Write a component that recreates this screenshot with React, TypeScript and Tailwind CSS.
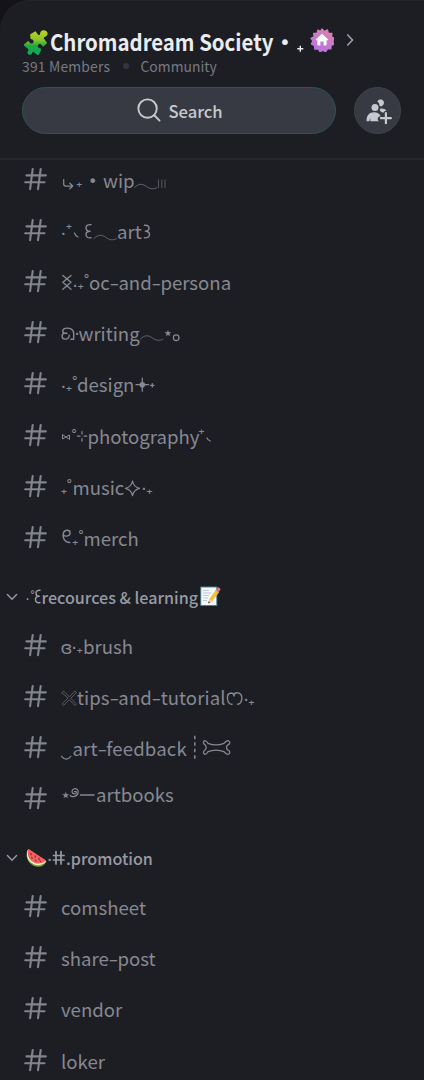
import React from 'react';

/**
 * Ornament between the words of a channel name.
 * x is the left edge on the page, y = 0 is the middle of the row.
 */
function Deco({ x, w, children }: { x: number; w: number; children: React.ReactNode }) {
  return (
    <svg
      width={w}
      height={32}
      viewBox={`${x} -16 ${w} 32`}
      fill="none"
      stroke="currentColor"
      strokeWidth={1.25}
      strokeLinecap="round"
      strokeLinejoin="round"
      className="shrink-0 overflow-visible"
    >
      {children}
    </svg>
  );
}

interface MarkProps {
  x: number;
  y: number;
}

const Glyph = ({ x, y, dy, size, children }: MarkProps & { dy: number; size: number; children: string }) => (
  <text
    x={x}
    y={y + dy}
    fontSize={size}
    textAnchor="middle"
    fill="currentColor"
    stroke="none"
    className="font-['DejaVu_Sans',sans-serif]"
  >
    {children}
  </text>
);

const Plus = ({ x, y }: MarkProps) => (
  <g className="font-bold">
    <Glyph x={x} y={y} dy={1} size={13}>₊</Glyph>
  </g>
);
const Ring = ({ x, y }: MarkProps) => <Glyph x={x} y={y} dy={11.7} size={15}>˚</Glyph>;
const Dot = ({ x, y }: MarkProps) => <Glyph x={x} y={y} dy={6} size={18}>·</Glyph>;
const Bullet = ({ x, y }: MarkProps) => <Glyph x={x} y={y} dy={6} size={16}>•</Glyph>;
const Star = ({ x, y }: MarkProps) => <Glyph x={x} y={y} dy={5.8} size={18}>⋆</Glyph>;

const Wave = ({ x, y }: MarkProps) => (
  <path
    d={`M${x} ${y}c4-4.3 8-4 12-1s7 2.800 10.500 1.200`}
    strokeWidth={0.9}
    opacity={0.7}
  />
);

// Hyphens are drawn wide, as in "share–post"
function Word({ className, children }: { className: string; children: string }) {
  return (
    <span className={`shrink-0 pt-[2px] whitespace-nowrap ${className}`}>
      {children.split('-').map((part, i) => (
        <React.Fragment key={i}>
          {i > 0 && <span className="inline-block scale-x-150 px-[1.1px]">-</span>}
          {part}
        </React.Fragment>
      ))}
    </span>
  );
}

function HashIcon() {
  return (
    <svg width="24" height="24" viewBox="0 0 24 24" fill="none" stroke="#82848e" strokeWidth="2.1" strokeLinecap="round" className="shrink-0">
      <path d="M9.700 2 7.100 22.200M17.700 2l-2.700 20.200M3.500 8.400h19.300M2.200 15.300h19.300" />
    </svg>
  );
}

function Channel({ children, raised }: { children: React.ReactNode; raised?: boolean }) {
  return (
    <li className="flex h-[51.2px] items-center pl-[23.2px]">
      <HashIcon />
      <div className={`ml-[13.8px] flex h-8 items-center ${raised ? 'mb-[10px]' : ''}`}>{children}</div>
    </li>
  );
}

function Category({ children }: { children: React.ReactNode }) {
  return (
    <h2 className="flex h-[56.6px] items-center pt-3 pl-[6px] text-[16.1px] font-medium text-[#969aa3]">
      <svg width="12" height="8" viewBox="0 0 12 8" fill="none" stroke="currentColor" strokeWidth="1.4" strokeLinecap="round" className="shrink-0">
        <path d="m1.400 1.500 4.600 4.800 4.600-4.800" />
      </svg>
      <div className="ml-2 flex h-8 items-center">{children}</div>
    </h2>
  );
}

function PuzzleIcon() {
  return (
    <svg width="26" height="27" viewBox="0 0 26 27" className="shrink-0">
      <defs>
        <linearGradient id="puzzle" x1="0" y1="0" x2="0" y2="1">
          <stop offset="0" stopColor="#c2d21f" />
          <stop offset=".4" stopColor="#86c52b" />
          <stop offset=".62" stopColor="#22a83c" />
          <stop offset="1" stopColor="#0fa765" />
        </linearGradient>
      </defs>
      <path
        fill="url(#puzzle)"
        d="M7.2 5.2 12.5 2.2l2.600 3.500c.6.800 1.700.300 1.900-.7.1-2 1.200-3.500 3-3.800 2-.3 4 .8 4.500 2.600.5 2-.8 3.600-2.700 4.200-1 .3-1.200 1-.6 1.900l2.900 4-3 3.200c-1 .8-1.800.2-2.300-.7-.9-1.500-2.600-1.800-3.500-.7-1 1.300-.3 2.900 1.200 3.400 1.100.4 2 .8 1.600 1.800L16 25.500c-.6.8-1.200.9-2 .3l-2.900-2.400c-.9-.8-1.700-.5-1.900.5-.4 1.600-1.900 2.200-3.400 1.600-1.400-.6-1.800-2.100-.9-3.300.8-1.200.7-1.900-.3-2.600L1.400 17c-.7-.7-.6-1.300.1-1.900l3-2.500c.9-.6 1.600-.2 2 .7.7 1.200 2 1.700 3.100 1 1.400-.9 1.400-2.600.1-3.500-.8-.5-1.700-.7-2.200-1.400-.3-.6 0-2.200-.3-4.200z"
      />
    </svg>
  );
}

function HomeBadge() {
  return (
    <svg width="24" height="24" viewBox="0 0 24 24" className="shrink-0">
      <defs>
        <linearGradient id="badge" x1=".8" y1="0" x2=".3" y2="1">
          <stop offset="0" stopColor="#dc83ad" />
          <stop offset="1" stopColor="#b473e2" />
        </linearGradient>
      </defs>
      <path
        fill="url(#badge)"
        stroke="url(#badge)"
        strokeWidth="1.2"
        strokeLinejoin="round"
        d="m12 .9 2.300 2.600 3.200-1.600 1 3.400 3.500.100-.5 3.400 3.100 1.600-1.900 2.900 1.500 3.100-3.100 1.100-.2 3.500-3.500-.1-1.700 3-2.900-1.600-2.800 1.600-1.700-2.800-3.600.100-.2-3.500L1.300 16l1.500-3L.9 10.200 4 8.700l-.4-3.400 3.400-.3L8 1.900l2.300 1.600z"
      />
      <path fill="#fff" d="m12 5.700 6 5.500c.5.500.200 1-.4 1h-1v4.200c0 .7-.3 1-1 1h-2v-4h-3.200v4h-2c-.7 0-1-.3-1-1v-4.200h-1c-.6 0-.9-.5-.4-1z" />
    </svg>
  );
}

function InviteIcon() {
  return (
    <svg width="28" height="28" viewBox="0 0 28 28" fill="#c8c9ce">
      <circle cx="11" cy="10.500" r="3.500" />
      <path d="M2.500 24c0-5.500 2.800-8.700 7.500-8.700 3.200 0 5.700 1.300 6.700 3.900-2 .2-3 1.200-3 2.800 0 1 .6 2 1.600 2.300H6.400l-.2-3.500-.9 3.500H3.400c-.6 0-.9-.1-.9-.3z" />
      <path d="M13.700 3.900c1.300-1.800 4.200-1.900 5.600-.2 1.300 1.700.7 4.400-1.400 5.300-.8.400-1.600.3-2.300 0-.1-1.900-.8-3.600-2.300-4.500z" />
      <path d="M16.300 11.500c2.700-.3 4.900.400 6.200 2-1.400.2-2.500.8-3 2.100-.9.2-1.700-.2-2.700-1l-1.100-1.100c.4-.6.6-1.300.6-2z" />
      <path d="M21.900 16.200v10M16.900 21.200h10" stroke="#c8c9ce" strokeWidth="2.200" strokeLinecap="round" />
    </svg>
  );
}

function MemoIcon() {
  return (
    <svg width="21" height="21" viewBox="0 0 21 21" className="shrink-0">
      <rect x=".8" y="1" width="16" height="18.500" fill="#f4f8fb" stroke="#447f9f" strokeWidth=".9" />
      <path d="M3 4.500h6M3 7h8M3 9.500h6M3 12h5M3 14.500h4" stroke="#a6b5bd" strokeWidth=".7" />
      <path d="m8.300 17.300 1-4.400L16.200 3.600l3 2.300-7.100 9.300z" fill="#fbc02d" />
      <path d="m9.300 12.900-1 4.400 3.800-2.100z" fill="#f4cf9b" />
      <path d="m8.700 15.300-.5 2.200 2-1z" fill="#3c3c3c" />
      <path d="m15.500 4.500 3 2.300" stroke="#9eb3bd" strokeWidth="1.500" />
      <path d="m16 3.500 1.400-1.900c.9-1 3.700 1 2.900 2.300l-1.400 1.900z" fill="#ee6b75" />
    </svg>
  );
}

function WatermelonIcon() {
  return (
    <svg width="21" height="19" viewBox="0 0 21 19" className="shrink-0">
      <path d="M1.500 1C-.8 7 1.500 14 7.500 16.700c5.200 2.300 10.600.7 13-4.200z" fill="#71a93b" />
      <path d="M1.500 1C-.2 7 2.100 12.800 7.800 15.200c4.800 2 9.500.8 12.300-2.900z" fill="#f3f0c2" />
      <path d="M2 .7C.9 6 3.200 11.600 8.300 13.700c4.300 1.700 8.500.8 11.300-1.600.5-.5.4-.9-.1-1.200L3.100.3C2.500-.1 2.100.1 2 .7z" fill="#f4605f" />
      <path d="M5 4.500v1.300M5.700 8.300l.4 1M9.200 7v1.300M9.600 11l.5.900M13 9.200v1.200M14 12l.8.500" stroke="#49302b" strokeWidth="1" strokeLinecap="round" />
    </svg>
  );
}

function Header() {
  return (
    <header className="h-[159px] shrink-0 border-b-2 border-[#26272c]">
      <div className="flex h-[54.500px] items-end pl-[23px]">
        <PuzzleIcon />
        <h1 className="ml-[1px] h-[34px] w-[222px] shrink-0 origin-left scale-x-[0.902] text-[22.6px] leading-[40px] font-bold whitespace-nowrap text-[#ebecef]">
          Chromadream Society
        </h1>
        <div className="h-8 w-[37.500px] text-[#ebecef]">
          <svg width="36" height="32" viewBox="272 -16 36 32" fill="none" className="overflow-visible">
            <Glyph x={284.800} y={1.500} dy={7.300} size={20}>•</Glyph>
            <path d="M297.300 8.700h6M300.300 5.700v6" stroke="currentColor" strokeWidth="1.400" />
          </svg>
        </div>
        <div className="mb-[4px] flex items-center gap-3">
          <HomeBadge />
          <svg width="9" height="14" viewBox="0 0 9 14" fill="none" stroke="#a1a3ab" strokeWidth="1.500" className="shrink-0">
            <path d="m1.300 1.500 5.200 5.500-5.200 5.500" />
          </svg>
        </div>
      </div>

      <div className="flex h-[21px] items-center pl-[22px] text-[13.900px] text-[#777a84]">
        <span className="w-[88px] tracking-[0.180px] whitespace-nowrap">391 Members</span>
        <span className="mr-[12px] ml-[12.500px] size-[6px] shrink-0 rounded-full bg-[#33363d]" />
        <span className="whitespace-nowrap">Community</span>
      </div>

      <div className="mt-[10.500px] flex items-center gap-[18px] pl-[22.300px]">
        <button className="flex h-[47px] w-[314px] shrink-0 items-center justify-center gap-[7.500px] rounded-full border border-[#2b5459] bg-[#383a43] pt-[2px] pl-[1px] text-[16.600px] font-medium text-[#c8c9ce]">
          <svg width="24" height="24" viewBox="0 0 25 25" fill="none" stroke="currentColor" strokeWidth="2" strokeLinecap="round" className="-mt-[4px]">
            <circle cx="11" cy="11" r="9.600" />
            <path d="m18 18 5.500 5.500" />
          </svg>
          Search
        </button>
        <button className="flex size-[47px] shrink-0 items-center justify-center rounded-full border border-[#41434c] bg-[#383a43]">
          <InviteIcon />
        </button>
      </div>
    </header>
  );
}

export default function App() {
  return (
    <div className="h-[1080px] w-[424px] overflow-hidden bg-[#131318] font-['Noto_Sans_CJK_JP',sans-serif]">
      <div className="flex h-full flex-col overflow-hidden rounded-tl-[30px] border-t border-[#24252a] bg-[#1d1e23]">
        <Header />

        <nav className="-mt-[7px] text-[18.600px] leading-8 text-[#868892]">
          <ul>
            <Channel>
              <Deco x={61} w={42}>
                <path d="M63.700.5v4.500q0 2 2 2h7M69.800 4.200l3 2.800-3 2.800" />
                <Plus x={79.300} y={6.800} />
                <Bullet x={92.700} y={1.500} />
              </Deco>
              <Word className="w-[31px]">wip</Word>
              <Deco x={134} w={32}>
                <Wave x={134.500} y={8.500} />
                <path d="M158.500 1v7.500M161.800 1v7.500M165 1v7.500" strokeWidth="0.800" opacity="0.700" />
              </Deco>
            </Channel>

            <Channel>
              <Deco x={61} w={56}>
                <Dot x={63.300} y={4.300} />
                <Plus x={69} y={-1.700} />
                <path d="M74.500 3q1 3 3.500 4" />
                <path d="M91-5.300c-3.500-.4-5 1-5 3 0 2.200 1.500 3.500 4 3.500-2.500 0-4 1.300-4 3.400 0 2.300 1.800 3.600 5 3.200" strokeWidth="1.400" />
                <Wave x={94} y={8.500} />
              </Deco>
              <Word className="w-[26px]">art</Word>
              <Deco x={143} w={8}>
                <path d="M144.500-4.700c3.300-.4 4.500 1 4.500 2.800 0 2-1.400 3.100-3.600 3.100 2.700 0 4.100 1.200 4.100 3.400 0 2.400-2 3.500-5 3.200" strokeWidth="1.400" />
              </Deco>
            </Channel>

            <Channel>
              <Deco x={61} w={28}>
                <path d="m62.800-5.500 8.200 6.800-8.200 7M71-5.500l-8.200 6.800 8.200 7" strokeWidth="1.400" />
                <Dot x={75} y={4.700} />
                <Plus x={80.700} y={7} />
                <Ring x={86.500} y={-4.300} />
              </Deco>
              <Word className="w-[142px]">oc-and-persona</Word>
            </Channel>

            <Channel>
              <Deco x={61} w={17.500}>
                <path d="M67 1.300h-2.300c-2.500-.3-2.800-4.100.500-4.900 4-.9 8.500.5 8.500 5.200V7.300M64.700 1.300c-3.500.300-3.400 5.400 0 5.800 3 .3 4.600-1.300 4.500-3.900M71 7.300h2.700" strokeWidth="1.400" />
                <Dot x={77} y={2} />
              </Deco>
              <Word className="w-[62px]">writing</Word>
              <Deco x={140.500} w={41}>
                <Wave x={141} y={7} />
                <Star x={168.300} y={1} />
                <circle cx="176.700" cy="5.700" r="2.800" />
              </Deco>
            </Channel>

            <Channel>
              <Deco x={61} w={16}>
                <Dot x={63.300} y={3.700} />
                <Plus x={69} y={7} />
                <Ring x={74.700} y={-4.300} />
              </Deco>
              <Word className="w-[58px]">design</Word>
              <Deco x={135} w={20}>
                <circle cx="142.300" cy="1.700" r="2.800" fill="currentColor" stroke="none" />
                <path d="M136 1.700h12.600M142.300-4.800v13M150.600 2.300h3.400M152.300.6V4" />
              </Deco>
            </Channel>

            <Channel>
              <Deco x={61} w={26.500}>
                <path d="M62.500 0v4l7-4v4z" strokeWidth="1" />
                <Ring x={74} y={-4} />
                <path d="M82-3.500V-1M82 3.500V6M77.500 1.200H80M84 1.200h2.700" />
              </Deco>
              <Word className="w-[111px]">photography</Word>
              <Deco x={198.500} w={14}>
                <Plus x={201.900} y={-1.700} />
                <path d="M207.500 3q1 2.500 3.300 3" />
              </Deco>
            </Channel>

            <Channel>
              <Deco x={61} w={11.500}>
                <Plus x={64} y={7} />
                <Ring x={69.300} y={-4.300} />
              </Deco>
              <Word className="w-[52px]">music</Word>
              <Deco x={124.500} w={28}>
                <path d="M133-5q1.200 6 7 7.300-5.800 1.300-7 7.300-1.200-6-7-7.300 5.800-1.300 7-7.300z" />
                <Dot x={144.300} y={3.300} />
                <Plus x={150} y={7} />
              </Deco>
            </Channel>

            <Channel>
              <Deco x={61} w={22.500}>
                <path d="M63.800-1.800c1.500 1.700 6.300.8 6.300-2.300 0-3.500-5.300-3.400-6.600-.2-1.600 4.300.7 9.600 6.300 9.800" strokeWidth="1.400" />
                <Plus x={75.300} y={7} />
                <Ring x={81} y={-4.300} />
              </Deco>
              <Word className="w-[56px]">merch</Word>
            </Channel>
          </ul>

          <Category>
            <Deco x={26} w={15.500}>
              <Glyph x={27.500} y={2} dy={4.700} size={14}>·</Glyph>
              <Glyph x={32.400} y={-4.800} dy={9.500} size={12}>˚</Glyph>
              <path d="M40-6.700c-3-.2-4 1.100-4 3 0 2 1.200 3 3.200 3-2.300 0-3.700 1.200-3.700 3.200 0 2.400 1.700 3.600 4.500 3" strokeWidth="1.500" />
            </Deco>
            <span className="w-[158px] shrink-0 whitespace-nowrap">recources &amp; learning</span>
            <MemoIcon />
          </Category>

          <ul>
            <Channel>
              <Deco x={61} w={22}>
                <Glyph x={66.500} y={0} dy={8.500} size={18}>ɞ</Glyph>
                <Dot x={74} y={3} />
                <Plus x={79.700} y={7.300} />
              </Deco>
              <Word className="w-[50px]">brush</Word>
            </Channel>

            <Channel>
              <Deco x={61} w={16}>
                <path d="m62-3.500 1.500-1.500 5.800 5.800L75-5l1.500 1.500-5.800 5.800 5.800 5.700L75 9.500l-5.700-5.800-5.800 5.800L62 8l5.800-5.700z" strokeWidth="0.800" opacity="0.700" />
              </Deco>
              <Word className="w-[149px] tracking-[0.070px]">tips-and-tutorial</Word>
              <Deco x={226} w={29}>
                <path d="M231-3c-3 .5-4 3-3.500 6 .5 3.200 2.300 5.500 4.500 5.300M231-3c2 0 3 1.200 3 3 0-2 1-3.200 2.800-3.200 3.500 0 5.600 2.500 5 6.200-.4 2.900-2 5.200-4.200 5.300" strokeWidth="1.400" />
                <Dot x={246} y={4.300} />
                <Plus x={251.500} y={7.800} />
              </Deco>
            </Channel>

            <Channel>
              <Deco x={61} w={11.500}>
                <path d="M61.500 9.300q4.700 5.500 9.300 0" />
              </Deco>
              <Word className="w-[115.500px] tracking-[0.130px]">art-feedback</Word>
              <Deco x={187.500} w={43}>
                <path d="M194.300-11.300V13" strokeDasharray="3.500 3" strokeLinecap="butt" strokeWidth="1.500" />
                <path d="M207.500-3.700c5 2 11 2 16 0 1.500-1.500 2.800-3.200 4.500-2.500 2 1 1.600 3.200-.5 4-2 1-2 4.300 0 5.400 2.100.8 2.500 3 .5 4-1.700.7-3-1-4.500-2.500-5-2-11-2-16 0-1 1.500-1.800 3.200-3.500 2.500-1.800-1-1.200-3 .5-4.200 1.500-1.200 1.500-4 0-5.200-1.700-1.200-2.300-3.200-.5-4.200 1.700-.5 2.500 1.200 3.500 2.700z" strokeWidth="1.300" />
              </Deco>
            </Channel>

            <Channel raised>
              <Deco x={61} w={35}>
                <Star x={65.700} y={1.700} />
                <path d="M76.500-.2c-1.200 2-4.500 1.200-4.500-1.300 0-2.200 3-3.700 5-2.300 2.200 1.700 1.500 6-2.300 7.200-2.300.7-4.300-.2-4.500-1M74.500-1.500h1.800" />
                <path d="M80.500 2h13.500" strokeWidth="1.500" />
              </Deco>
              <Word className="w-[78px]">artbooks</Word>
            </Channel>
          </ul>

          <Category>
            <WatermelonIcon />
            <Deco x={47} w={19}>
              <Dot x={49.700} y={1.500} />
              <path d="M56-6.500v12.500M61-6.500v12.500M53.500-2.500h10.500M53.500 2h10.500" strokeWidth="1.700" />
            </Deco>
            <span className="w-[87px] shrink-0 whitespace-nowrap">.promotion</span>
          </Category>

          <ul>
            <Channel><Word className="w-[86px]">comsheet</Word></Channel>
            <Channel><Word className="w-[96px]">share-post</Word></Channel>
            <Channel><Word className="w-[61px]">vendor</Word></Channel>
            <Channel><Word className="w-[43px]">loker</Word></Channel>
          </ul>
        </nav>
      </div>
    </div>
  );
}
